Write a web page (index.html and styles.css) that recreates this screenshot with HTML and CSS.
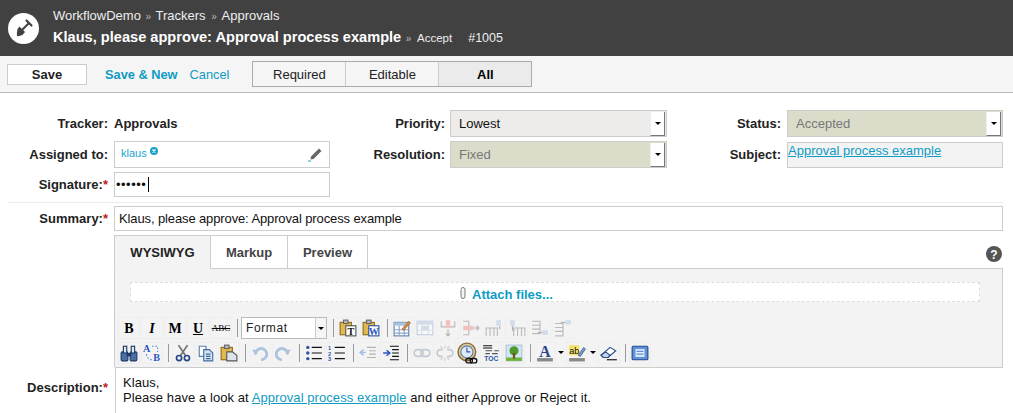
FILE: index.html
```html
<!DOCTYPE html>
<html lang="en">
<head>
<meta charset="utf-8">
<title>Klaus, please approve</title>
<link rel="stylesheet" href="styles.css">
</head>
<body>
<header class="head">
  <div class="logo"><svg viewBox="0 0 31 31" width="31" height="31"><circle cx="15.500" cy="15.500" r="15.500" fill="#fff"/><path d="M14 17 L21 10" stroke="#414141" stroke-width="2"/><path d="M18.500 7.500 L23.500 12.500" stroke="#414141" stroke-width="2.200" stroke-linecap="round"/><path d="M11.500 13.500 L17 19 L14.500 22 Q11 23.500 9 23 Q8.500 20.500 9.500 16 Z" fill="#414141"/></svg></div>
  <div class="head-text">
    <div class="crumbs">WorkflowDemo <i>»</i> Trackers <i class="wide">»</i> Approvals</div>
    <div class="title"><b>Klaus, please approve: Approval process example</b> <i>»</i> <span class="sub">Accept</span><span class="num">#1005</span></div>
  </div>
</header>
<nav class="bar">
  <button class="save">Save</button>
  <a class="link strong">Save &amp; New</a>
  <a class="link">Cancel</a>
  <div class="seg">
    <span>Required</span><span>Editable</span><span class="on">All</span>
  </div>
</nav>
<main>
<section class="fields">
  <label class="lab">Tracker:</label>
  <div class="plain">Approvals</div>
  <label class="lab lab2">Priority:</label>
  <div class="sel">Lowest<span class="drop"></span></div>
  <label class="lab lab3">Status:</label>
  <div class="sel off">Accepted<span class="drop"></span></div>

  <label class="lab">Assigned to:</label>
  <div class="box assign"><a class="user">klaus</a><svg class="x" viewBox="0 0 8 8" width="8" height="8"><circle cx="4" cy="4" r="4" fill="#1b9fc8"/><path d="M2.500 2.500 L5.500 5.500 M5.500 2.500 L2.500 5.500" stroke="#fff" stroke-width="1.200"/></svg><svg class="pen" viewBox="0 0 16 16" width="16" height="16"><path d="M4 10.500 L12 2.500 L14.500 5 L6.500 13 L3.500 13.500 Z" fill="#666"/><path d="M1 15 H4" stroke="#1b9fc8"/></svg></div>
  <label class="lab lab2">Resolution:</label>
  <div class="sel off">Fixed<span class="drop"></span></div>
  <label class="lab lab3">Subject:</label>
  <div class="subject"><a>Approval process example</a></div>

  <label class="lab">Signature:<em>*</em></label>
  <div class="box sig"><span class="dots">••••••</span><span class="caret"></span></div>
</section>
<hr class="rule">
<section class="row">
  <label class="lab">Summary:<em>*</em></label>
  <div class="box summary">Klaus, please approve: Approval process example</div>
</section>
<section class="row editor-top">
  <div></div>
  <div class="edit-col">
    <div class="tabs">
      <span class="tab on">WYSIWYG</span><span class="tab">Markup</span><span class="tab">Preview</span>
      <svg class="help" viewBox="0 0 16 16" width="16" height="16"><circle cx="8" cy="8" r="8" fill="#555"/><text x="8" y="12.500" text-anchor="middle" class="help-q">?</text></svg>
    </div>
    <div class="panel">
      <div class="attach"><svg viewBox="0 0 8 14" width="8" height="14"><path d="M2 4 V10.500 a2 2 0 0 0 4 0 V3.500 a2 2 0 0 0 -4 0" fill="#f4f4f4" stroke="#777"/></svg><a>Attach files...</a></div>
      <div class="tools">
        <span class="t"><b class="serif">B</b></span>
        <span class="t"><b class="serif it">I</b></span>
        <span class="t"><b class="serif">M</b></span>
        <span class="t"><b class="serif ul">U</b></span>
        <span class="t"><span class="serif abc">ABC</span></span>
        <span class="sep"></span>
        <span class="fmt">Format<span class="fmt-arrow"></span></span>
        <span class="sep"></span>
        <span class="t"><svg viewBox="0 0 16 16"><rect x="1" y="3" width="10" height="11" fill="#e3b84d" stroke="#8a6d1f"/><rect x="4" y="1" width="4" height="3" fill="#bbb" stroke="#666"/><rect x="6" y="6" width="9" height="9" fill="#fff" stroke="#555"/><text x="10.500" y="14" text-anchor="middle" class="st">T</text></svg></span>
        <span class="t"><svg viewBox="0 0 16 16"><rect x="1" y="3" width="10" height="11" fill="#e3b84d" stroke="#8a6d1f"/><rect x="4" y="1" width="4" height="3" fill="#bbb" stroke="#666"/><rect x="6" y="6" width="9" height="9" fill="#fff" stroke="#2b55a0"/><text x="10.500" y="14" text-anchor="middle" class="st blue">W</text></svg></span>
        <span class="sep"></span>
        <span class="t"><svg viewBox="0 0 16 16"><rect x="1" y="3" width="13" height="12" fill="#fff" stroke="#5a7fa8"/><rect x="1" y="3" width="13" height="3" fill="#a8c4e0"/><path d="M1 9.500H14M1 12.500H14M5.500 6V15M10 6V15" stroke="#8aa6c4"/><path d="M8 9 L14 2 L15.500 3.500 L9.500 10 Z" fill="#e58a3a" stroke="#8a4a14" stroke-width=".5"/></svg></span>
        <span class="t dim"><svg viewBox="0 0 16 16"><rect x="1" y="2" width="14" height="12" fill="#fff" stroke="#8aa6c4"/><rect x="1" y="2" width="14" height="3" fill="#a8c4e0"/><rect x="5" y="6" width="6" height="4" fill="#a8c4e0"/><path d="M1 10H15M5 5V14M11 5V14" stroke="#b5c8dc"/></svg></span>
        <span class="t dim"><svg viewBox="0 0 16 16"><path d="M2 2V7H14V2" fill="none" stroke="#777"/><rect x="6" y="1" width="4" height="7" fill="#e88"/><path d="M8 9V15M6 13L8 15L10 13" fill="none" stroke="#666"/></svg></span>
        <span class="t dim"><svg viewBox="0 0 16 16"><path d="M1 2H6V14H1" fill="none" stroke="#777"/><rect x="1" y="6" width="9" height="4" fill="#e88"/><path d="M10 8H15M13 6L15 8L13 10" fill="none" stroke="#666"/></svg></span>
        <span class="t dim"><svg viewBox="0 0 16 16"><path d="M1 15V8H11V15M4.500 8V15M8 8V15" fill="none" stroke="#777"/><rect x="10" y="1" width="4" height="5" fill="#a8c4e0"/><path d="M13 6V9" stroke="#666"/></svg></span>
        <span class="t dim"><svg viewBox="0 0 16 16"><path d="M5 15V8H15V15M8.500 8V15M12 8V15" fill="none" stroke="#777"/><rect x="2" y="1" width="4" height="5" fill="#a8c4e0"/><path d="M4 6V10H6" fill="none" stroke="#666"/></svg></span>
        <span class="t dim"><svg viewBox="0 0 16 16"><path d="M1 2H8V13H1M1 5.500H8M1 9H8" fill="none" stroke="#777"/><rect x="10" y="10" width="5" height="4" fill="#a8c4e0"/><path d="M10 12H6" stroke="#666"/></svg></span>
        <span class="t dim"><svg viewBox="0 0 16 16"><path d="M1 4H8V15H1M1 7.500H8M1 11H8" fill="none" stroke="#777"/><rect x="10" y="1" width="5" height="4" fill="#a8c4e0"/><path d="M10 3H6" stroke="#666"/></svg></span>
      </div>
      <div class="tools">
        <span class="t"><svg viewBox="0 0 16 16"><rect x="1" y="7" width="6" height="8" rx="1" fill="#4a6fa5" stroke="#1f3a66"/><rect x="9" y="7" width="6" height="8" rx="1" fill="#4a6fa5" stroke="#1f3a66"/><rect x="3" y="2" width="3" height="6" fill="#dfe9f5" stroke="#1f3a66"/><rect x="10" y="2" width="3" height="6" fill="#dfe9f5" stroke="#1f3a66"/><rect x="6" y="8" width="4" height="3" fill="#1f3a66"/></svg></span>
        <span class="t"><svg viewBox="0 0 16 16"><text x="0" y="7" class="st blue">A</text><text x="9" y="15" class="st blue">B</text><path d="M3 9 Q4 14 8 14 M8 2 H13 V7" fill="none" stroke="#4a8fe0" stroke-dasharray="1.500 1.500"/></svg></span>
        <span class="sep"></span>
        <span class="t"><svg viewBox="0 0 16 16"><path d="M4 1 L10 10 M12 1 L6 10" stroke="#777" stroke-width="1.600"/><circle cx="4.500" cy="12.500" r="2.300" fill="none" stroke="#26478a" stroke-width="1.500"/><circle cx="11.500" cy="12.500" r="2.300" fill="none" stroke="#26478a" stroke-width="1.500"/></svg></span>
        <span class="t"><svg viewBox="0 0 16 16"><path d="M2 2H8V11H2Z" fill="#fff" stroke="#5a7fa8"/><path d="M6 5H11L14 8V15H6Z" fill="#d5e3f2" stroke="#3f6aa0"/><path d="M8 9H12M8 11H12M8 13H12" stroke="#3f6aa0"/></svg></span>
        <span class="t"><svg viewBox="0 0 16 16"><rect x="1" y="3" width="10" height="11" fill="#e3b84d" stroke="#8a6d1f"/><rect x="4" y="1" width="4" height="3" fill="#bbb" stroke="#666"/><path d="M6 7H11L15 10V15H6Z" fill="#dde3ea" stroke="#555"/></svg></span>
        <span class="sep"></span>
        <span class="t dim"><svg viewBox="0 0 16 16"><path d="M4 9 A5 5 0 1 1 9 14" fill="none" stroke="#5b8ac4" stroke-width="2.500"/><path d="M1 5 L7 5 L4 10 Z" fill="#5b8ac4"/></svg></span>
        <span class="t dim"><svg viewBox="0 0 16 16"><path d="M12 9 A5 5 0 1 0 7 14" fill="none" stroke="#5b8ac4" stroke-width="2.500"/><path d="M15 5 L9 5 L12 10 Z" fill="#5b8ac4"/></svg></span>
        <span class="sep"></span>
        <span class="t"><svg viewBox="0 0 16 16"><path d="M6 3H15M6 8H15M6 13H15" stroke="#111" stroke-width="1.100"/><circle cx="2.500" cy="3" r="1.500" fill="#2b55a0"/><circle cx="2.500" cy="8" r="1.500" fill="#2b55a0"/><circle cx="2.500" cy="13" r="1.500" fill="#2b55a0"/></svg></span>
        <span class="t"><svg viewBox="0 0 16 16"><path d="M6 3H15M6 8H15M6 13H15" stroke="#111" stroke-width="1.100"/><text x="0" y="5.500" class="mini">1</text><text x="0" y="10.500" class="mini">2</text><text x="0" y="15.500" class="mini">3</text></svg></span>
        <span class="sep"></span>
        <span class="t dim"><svg viewBox="0 0 16 16"><path d="M7 3H15M9 6H15M9 9H15M7 12H15" stroke="#666"/><path d="M6 7.500H1M4 5L1 7.500L4 10" fill="none" stroke="#3f7fd0" stroke-width="1.300"/></svg></span>
        <span class="t"><svg viewBox="0 0 16 16"><path d="M7 2H15M9 5H15M9 8H15M9 11H15M7 14H15" stroke="#111" stroke-width="1.100"/><path d="M1 8H6M4 5.500L7 8L4 10.500" fill="none" stroke="#2b55c0" stroke-width="1.300"/></svg></span>
        <span class="sep"></span>
        <span class="t dim"><svg viewBox="0 0 16 16"><rect x="1" y="5" width="8" height="6" rx="3" fill="none" stroke="#8a99ad" stroke-width="1.500"/><rect x="7" y="5" width="8" height="6" rx="3" fill="none" stroke="#8a99ad" stroke-width="1.500"/></svg></span>
        <span class="t dim"><svg viewBox="0 0 16 16"><path d="M6 5H4a3 3 0 0 0 0 6H6M10 5H12a3 3 0 0 1 0 6H10" fill="none" stroke="#8a99ad" stroke-width="1.500"/><path d="M8 1V4M8 12V15M4 2L6 4M12 2L10 4M4 14L6 12M12 14L10 12" stroke="#aaa"/></svg></span>
        <span class="t"><svg viewBox="0 0 20 20" class="big"><circle cx="9" cy="9" r="8" fill="#e2c89a" stroke="#8a6d3a" stroke-width="1.300"/><circle cx="9" cy="9" r="5.500" fill="#dfe9f5" stroke="#5a7fa8"/><path d="M9 5V9H12" fill="none" stroke="#2b55a0"/><rect x="8" y="15" width="6" height="4" rx="2" fill="none" stroke="#111" stroke-width="1.200"/><rect x="12" y="15" width="6" height="4" rx="2" fill="none" stroke="#111" stroke-width="1.200"/></svg></span>
        <span class="t"><svg viewBox="0 0 16 16"><path d="M1 1.500H9M1 3.500H9" stroke="#111"/><path d="M3 6H9M11 6H15M3 8.500H7M9 8.500H14" stroke="#555"/><text x="2" y="15.500" class="mini wide">TOC</text></svg></span>
        <span class="t"><svg viewBox="0 0 16 16"><rect x="1" y="1" width="14" height="14" fill="#cfe6f7" stroke="#b5c5d5"/><rect x="1" y="12" width="14" height="3" fill="#6fb53a"/><circle cx="8" cy="6" r="4" fill="#4f9a2a"/><rect x="7" y="8" width="2" height="5" fill="#7a4a1a"/></svg></span>
        <span class="sep"></span>
        <span class="t nomargin"><svg viewBox="0 0 16 16"><text x="8" y="11.500" text-anchor="middle" class="big-a">A</text><rect x="1" y="12.500" width="14" height="3" fill="#888"/></svg></span>
        <span class="arr"></span>
        <span class="t nomargin"><svg viewBox="0 0 16 16"><rect x="1" y="1" width="9" height="9" fill="#f3e36a"/><text x="1" y="9" class="ab">ab</text><path d="M9 10 L14 3 L15.500 4.500 L11 11 Z" fill="#7d97bd" stroke="#26478a" stroke-width=".6"/><rect x="1" y="12.500" width="14" height="3" fill="#888"/></svg></span>
        <span class="arr"></span>
        <span class="t"><svg viewBox="0 0 16 16"><path d="M1 10 L9 3 L14 6 L7 12 L3 12 Z" fill="#fff" stroke="#2b4f85"/><path d="M1 10 L5 7 L9 10 L7 12 L3 12 Z" fill="#c5d5e8" stroke="#2b4f85"/><path d="M6 14H15" stroke="#111"/></svg></span>
        <span class="sep"></span>
        <span class="t"><svg viewBox="0 0 16 16"><rect x="1" y="2" width="14" height="12" rx="1" fill="#5f93d8" stroke="#26478a"/><rect x="4" y="4.500" width="8" height="7" fill="#dfe9f8"/><path d="M5 6.500H11M5 9H11" stroke="#5f93d8"/></svg></span>
      </div>
    </div>
  </div>
</section>
<section class="row desc">
  <label class="lab">Description:<em>*</em></label>
  <div class="content">Klaus,<br>Please have a look at <a>Approval process example</a> and either Approve or Reject it.</div>
</section>
</main>
</body>
</html>
```
FILE: styles.css
```css
html, body { margin: 0; height: 413px; overflow: hidden; background: #fff; }
body { font: 13px/15px "Liberation Sans", Arial, sans-serif; color: #222; }
a { color: #0f9bc3; }

.head { height: 56px; background: #414141; color: #fff; display: flex; align-items: center; box-sizing: border-box; padding-left: 8px; }
.logo { width: 31px; height: 31px; margin-right: 14px; }
.logo svg { display: block; }
.head-text { display: flex; flex-direction: column; gap: 4px; margin-top: -1px; }
.crumbs { font-size: 13px; line-height: 16px; color: #eee; }
.head i { font-style: normal; font-size: 10px; color: #bbb; margin: 0 1px; }
.head i.wide { margin: 0 2px; }
.title { line-height: 17px; }
.title b { font-size: 14.6px; }
.sub { font-size: 11.500px; color: #eee; margin-left: 1px; }
.num { font-size: 12.500px; color: #eee; margin-left: 16px; }

.bar { height: 37px; box-sizing: border-box; background: #f5f5f5; border-bottom: 1px solid #bbb; display: flex; align-items: center; padding-left: 7px; }
.save { width: 80px; height: 21px; padding: 0; background: #fff; border: 1px solid #ccc; font: bold 13px "Liberation Sans", Arial, sans-serif; color: #222; margin-right: 18px; }
.link { font-size: 12.800px; margin-right: 12px; }
.link.strong { font-weight: bold; }
.seg { display: flex; height: 26px; box-sizing: border-box; border: 1px solid #aaa; margin-left: 11px; width: 280px; }
.seg span { flex: 1; display: flex; align-items: center; justify-content: center; border-left: 1px solid #ccc; }
.seg span:first-child { border-left: 0; }
.seg .on { background: #ebebeb; font-weight: bold; color: #000; }

.fields { display: grid; grid-template-columns: 106px 216px 120px 217px 120px 216px; grid-template-rows: 27px 27px 25px; row-gap: 4px; padding: 17px 0 0 8px; }
.lab { font-weight: bold; text-align: right; padding-right: 6px; align-self: center; color: #222; }
.lab2 { padding-right: 5px; }
.lab3 { padding-right: 6px; }
.lab em { color: #b22; font-style: normal; }
.plain { font-weight: bold; align-self: center; }
.box { border: 1px solid #ccc; box-sizing: border-box; background: #fff; display: flex; align-items: center; }
.sel { position: relative; box-sizing: border-box; background: #eeeceb; border: 1px solid #ccc; padding-left: 8px; display: flex; align-items: center; color: #111; }
.sel.off { background: #dcdccb; color: #777; }
.drop { position: absolute; top: 1px; right: 1px; width: 13px; height: 23px; background: #fff; border-right: 1px solid #777; border-bottom: 1px solid #777; border-left: 1px solid #eee; }
.drop::after { content: ""; position: absolute; left: 4px; top: 10px; border: 3px solid transparent; border-top: 3px solid #000; border-bottom: 0; }
.assign { position: relative; padding: 0 0 3px 6px; font-size: 11px; }
.user { color: #1ba3d0; }
.x { margin: -5px 0 0 3px; }
.pen { position: absolute; right: 6px; top: 4px; }
.subject { box-sizing: border-box; margin-top: 1px; background: #f3f3f3; border: 1px solid #ccc; line-height: 15px; }
.subject a, .content a { text-decoration: underline; }
.sig { padding-left: 1px; }
.dots { font-size: 13px; letter-spacing: .5px; color: #111; }
.caret { width: 1px; height: 15px; background: #000; margin-left: 2px; }

.rule { border: 0; border-top: 1px solid #ececec; margin: 5px 10px 3px 8px; }
.row { display: grid; grid-template-columns: 106px 889px; padding-left: 8px; }
.summary { height: 25px; padding-left: 4px; color: #111; letter-spacing: -.12px; }
.editor-top { margin-top: 4px; }
.edit-col { min-width: 0; }

.tabs { display: flex; height: 34px; box-sizing: border-box; align-items: stretch; position: relative; background: linear-gradient(#ccc, #ccc) left bottom / 100% 1px no-repeat; }
.tab { box-sizing: border-box; border: 1px solid #ccc; border-left: 0; display: flex; align-items: center; justify-content: center; font-weight: bold; color: #444; width: 80px; background: #fff; }
.tab:nth-child(2) { width: 77px; }
.tab.on { width: 97px; border-left: 1px solid #ccc; background: #f3f3f3; border-bottom-color: #f3f3f3; color: #222; }
.help { position: absolute; right: 1px; top: 11px; }
.help-q { font: bold 12px "Liberation Sans", sans-serif; fill: #fff; }

.panel { box-sizing: border-box; height: 98px; background: #f3f3f3; border: 1px solid #ccc; border-top: 0; border-bottom: 0; padding: 13px 0 0 3px; }
.attach { height: 20px; box-sizing: border-box; background: #fff; border: 1px dashed #ddd; display: flex; align-items: center; gap: 5px; margin: 0 22px 0 12px; padding: 4px 0 0 328px; }
.attach svg { margin-top: -3px; }
.attach a { font-weight: bold; font-size: 13px; }
.tools { display: flex; align-items: center; height: 22px; margin-top: 3px; }
.attach + .tools { margin-top: 15px; }
.t { width: 20px; height: 20px; margin-right: 1px; flex: none; border: 1px solid #eee; display: flex; align-items: center; justify-content: center; color: #000; }
.t svg { width: 18px; height: 18px; display: block; flex: none; }
.t svg.big { width: 22px; height: 22px; }
.t.nomargin { margin-right: 0; }
.dim { opacity: .45; }
.serif { font-family: "Liberation Serif", serif; font-size: 14px; }
.it { font-style: italic; }
.ul { text-decoration: underline; }
.abc { font-size: 9px; text-decoration: line-through; }
.sep { width: 1px; height: 18px; background: #999; margin: 0 3px 0 4px; flex: none; }
.fmt { width: 86px; height: 22px; box-sizing: border-box; background: #fff; border: 1px solid #bbb; flex: none; position: relative; padding-left: 4px; display: flex; align-items: center; font-size: 12px; letter-spacing: .6px; margin-right: 2px; color: #222; }
.fmt-arrow { position: absolute; right: 0; top: 0; bottom: 0; width: 10px; border-left: 1px solid #ccc; background: #f5f5f5; }
.fmt-arrow::after, .arr::after { content: ""; position: absolute; left: 2px; top: 9px; border: 3px solid transparent; border-top: 3px solid #000; border-bottom: 0; }
.arr { position: relative; width: 10px; height: 22px; flex: none; }
.st { font: bold 9px "Liberation Serif", serif; fill: #111; }
.st.blue { fill: #2b55c0; }
.mini { font: bold 5px "Liberation Sans", sans-serif; fill: #2b55a0; }
.mini.wide { font-size: 6px; }
.big-a { font: bold 14px "Liberation Serif", serif; fill: #26478a; }
.ab { font: 8px "Liberation Sans", sans-serif; fill: #111; }

.desc .lab { align-self: start; padding-top: 13px; }
.content { box-sizing: border-box; height: 46px; background: #fff; border-left: 1px solid #ccc; border-top: 1px solid #ccc; padding: 7px 0 0 7px; margin-left: 1px; color: #111; line-height: 15px; letter-spacing: .07px; }
```
